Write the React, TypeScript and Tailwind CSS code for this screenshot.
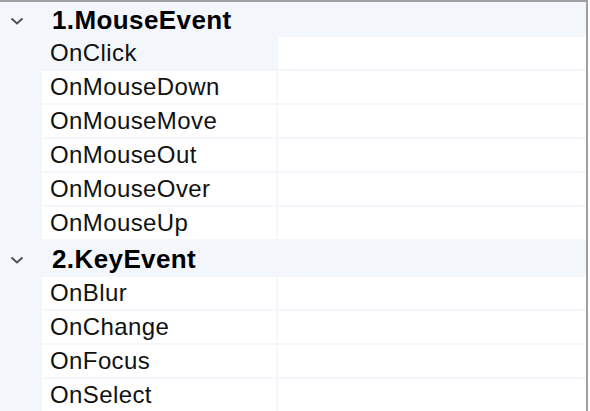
import React from "react";

type Group = { title: string; items: string[] };

const groups: Group[] = [
  {
    title: "1.MouseEvent",
    items: ["OnClick", "OnMouseDown", "OnMouseMove", "OnMouseOut", "OnMouseOver", "OnMouseUp"],
  },
  { title: "2.KeyEvent", items: ["OnBlur", "OnChange", "OnFocus", "OnSelect"] },
];

const Chevron = () => (
  <svg width="14" height="8" viewBox="0 0 14 8" className="block">
    <path d="M1.5 1.5 L7 6.5 L12.5 1.5" fill="none" stroke="#505050" strokeWidth="2" />
  </svg>
);

const PropRow = ({ name, selected }: { name: string; selected?: boolean }) => (
  <div className="flex h-[34px] pb-[2px]">
    <div className="w-[42px] shrink-0" />
    <div
      className={`w-[234px] shrink-0 pl-2 text-[24px] leading-[32px] tracking-[0.4px] text-[#111] ${
        selected ? "bg-[#f3f6fb]" : "bg-white"
      }`}
    >
      {name}
    </div>
    <div className="ml-[2px] flex-1 bg-white" />
  </div>
);

export default function App() {
  return (
    <div
      className="h-[411px] w-[590px] overflow-hidden bg-white"
      style={{ fontFamily: '"Liberation Sans", Arial, sans-serif' }}
    >
      <div className="h-full w-[588px] border-t-2 border-r-2 border-[#a0a0a0] bg-[#f3f6fb]">
        {groups.map((g, gi) => (
          <div key={g.title}>
            <div className={`flex items-center ${gi === 0 ? "h-[35px]" : "h-[36px]"}`}>
              <div className="flex w-[42px] shrink-0 justify-center pr-2 pt-[2px]">
                <Chevron />
              </div>
              <div className="pl-[10px] text-[26px] font-bold leading-none tracking-[0.4px] text-black">
                {g.title}
              </div>
            </div>
            {g.items.map((it, i) => (
              <PropRow key={it} name={it} selected={gi === 0 && i === 0} />
            ))}
          </div>
        ))}
      </div>
    </div>
  );
}
